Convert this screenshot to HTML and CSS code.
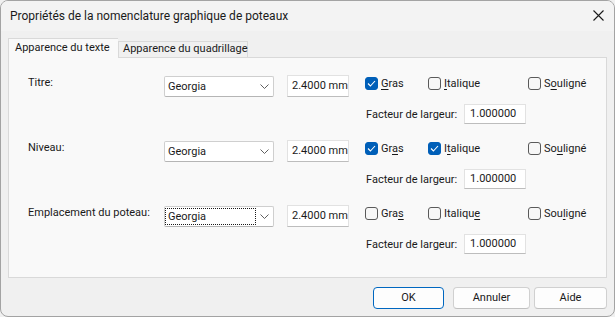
FILE: index.html
```html
<!DOCTYPE html>
<html lang="fr">
<head>
    <meta charset="UTF-8">
    <title>Propriétés de la nomenclature graphique de poteaux</title>
    <link rel="stylesheet" href="styles.css">
</head>
<body>
    <div class="window">
        <div class="titlebar">
            <span class="title">Propriétés de la nomenclature graphique de poteaux</span>
            <svg class="close" width="11" height="11" viewBox="0 0 11 11">
                <path d="M0.5 0.5 L10.5 10.5 M10.5 0.5 L0.5 10.5" stroke="#1a1a1a" stroke-width="1.1" fill="none"/>
            </svg>
        </div>

        <div class="content">
            <div class="tabs">
                <div class="tab active">Apparence du texte</div>
                <div class="tab">Apparence du quadrillage</div>
            </div>

            <div class="panel">
                <!-- Titre -->
                <div class="group">
                    <div class="line">
                        <span class="label">Titre:</span>
                        <div class="combo">
                            <span class="combo-text">Georgia</span>
                            <svg class="chevron" width="9" height="5" viewBox="0 0 9 5"><path d="M0.5 0.5 L4.5 4.5 L8.5 0.5" stroke="#5f5f5f" fill="none"/></svg>
                        </div>
                        <div class="field">2.4000 mm</div>
                        <div class="checks">
                            <div class="check gras"><span class="box checked"><svg width="9" height="7" viewBox="0 0 9 7"><path d="M1 3.5 L3.4 6 L8 1" stroke="#fff" stroke-width="1.1" fill="none"/></svg></span><span><u>G</u>ras</span></div>
                            <div class="check italique"><span class="box"></span><span><u>I</u>talique</span></div>
                            <div class="check"><span class="box"></span><span>S<u>o</u>uligné</span></div>
                        </div>
                    </div>
                    <div class="line sub">
                        <span class="factor-label">Facteur de largeur:</span>
                        <div class="field factor">1.000000</div>
                    </div>
                </div>

                <!-- Niveau -->
                <div class="group">
                    <div class="line">
                        <span class="label">Niveau:</span>
                        <div class="combo">
                            <span class="combo-text">Georgia</span>
                            <svg class="chevron" width="9" height="5" viewBox="0 0 9 5"><path d="M0.5 0.5 L4.5 4.5 L8.5 0.5" stroke="#5f5f5f" fill="none"/></svg>
                        </div>
                        <div class="field">2.4000 mm</div>
                        <div class="checks">
                            <div class="check gras"><span class="box checked"><svg width="9" height="7" viewBox="0 0 9 7"><path d="M1 3.5 L3.4 6 L8 1" stroke="#fff" stroke-width="1.1" fill="none"/></svg></span><span>Gr<u>a</u>s</span></div>
                            <div class="check italique"><span class="box checked"><svg width="9" height="7" viewBox="0 0 9 7"><path d="M1 3.5 L3.4 6 L8 1" stroke="#fff" stroke-width="1.1" fill="none"/></svg></span><span>I<u>t</u>alique</span></div>
                            <div class="check"><span class="box"></span><span>So<u>u</u>ligné</span></div>
                        </div>
                    </div>
                    <div class="line sub">
                        <span class="factor-label">Facteur de largeur:</span>
                        <div class="field factor">1.000000</div>
                    </div>
                </div>

                <!-- Emplacement du poteau -->
                <div class="group">
                    <div class="line">
                        <span class="label">Emplacement du poteau:</span>
                        <div class="combo">
                            <span class="combo-text focused">Georgia</span>
                            <svg class="chevron" width="9" height="5" viewBox="0 0 9 5"><path d="M0.5 0.5 L4.5 4.5 L8.5 0.5" stroke="#5f5f5f" fill="none"/></svg>
                        </div>
                        <div class="field">2.4000 mm</div>
                        <div class="checks">
                            <div class="check gras"><span class="box"></span><span>Gra<u>s</u></span></div>
                            <div class="check italique"><span class="box"></span><span>Italiqu<u>e</u></span></div>
                            <div class="check"><span class="box"></span><span>Sou<u>l</u>igné</span></div>
                        </div>
                    </div>
                    <div class="line sub">
                        <span class="factor-label">Facteur de largeur:</span>
                        <div class="field factor">1.000000</div>
                    </div>
                </div>
            </div>

            <div class="buttons">
                <div class="btn default">OK</div>
                <div class="btn cancel">Annuler</div>
                <div class="btn help">Aide</div>
            </div>
        </div>
    </div>
</body>
</html>
```

FILE: styles.css
```css
* {
    margin: 0;
    padding: 0;
    box-sizing: border-box;
}

body {
    font-family: Roboto, 'Liberation Sans', Arial, sans-serif;
    font-size: 11px;
    color: #1a1a1a;
    background-color: #f0f0f0;
}

.window {
    width: 615px;
    height: 317px;
    border: 1px solid #a3a3a3;
    border-radius: 8px;
    background-color: #f0f0f0;
    overflow: hidden;
}

.titlebar {
    height: 30px;
    display: flex;
    align-items: center;
    justify-content: space-between;
    padding: 0 10px 0 9px;
    background-color: #f3f3f3;
}

.title {
    font-size: 12px;
    margin-top: -1px;
}

.close {
    margin-top: -1px;
}

.content {
    padding: 0 7px;
}

/* onglets */
.tabs {
    display: flex;
    align-items: flex-end;
    margin-top: 7px;
    height: 19px;
    position: relative;
    z-index: 2;
    white-space: nowrap;
}

.tab {
    height: 16px;
    line-height: 14px;
    padding: 0 4px;
    width: 130px;
    border: 1px solid #d9d9d9;
    border-bottom: none;
    background-color: #f0f0f0;
}

.tab.active {
    height: 20px;
    line-height: 18px;
    margin-bottom: -1px;
    padding: 0 6px;
    width: 110px;
    background-color: #f9f9f9;
    border-right: none;
}

.panel {
    height: 221px;
    border: 1px solid #d9d9d9;
    background-color: #f9f9f9;
    padding: 17px 0 0 19px;
    position: relative;
    z-index: 1;
}

.group {
    margin-bottom: 16px;
}

.line {
    display: flex;
    align-items: flex-start;
    height: 22px;
}

.line.sub {
    margin-top: 7px;
    height: 20px;
    padding-left: 338px;
    align-items: center;
}

.label {
    width: 136px;
    line-height: 15px;
    white-space: nowrap;
}

.combo {
    width: 110px;
    height: 21px;
    margin-top: 1px;
    border: 1px solid #cfcfcf;
    border-bottom-color: #b5b5b5;
    border-radius: 2px;
    background-color: #ffffff;
    display: flex;
    align-items: center;
    justify-content: space-between;
    padding: 0 4px 0 0;
}

.combo-text {
    line-height: 15px;
    padding: 0 2px;
    border: 1px dotted transparent;
    width: 91px;
}

.combo-text.focused {
    border-color: #1a1a1a;
}

.field {
    width: 62px;
    height: 22px;
    margin-left: 13px;
    border: 1px solid #e2e2e2;
    border-bottom-color: #bdbdbd;
    background-color: #ffffff;
    line-height: 20px;
    padding-left: 4px;
    white-space: nowrap;
    overflow: hidden;
}

.field.factor {
    height: 20px;
    line-height: 18px;
    margin-left: 7px;
    padding-left: 5px;
}

.factor-label {
    white-space: nowrap;
}

.checks {
    display: flex;
    margin-left: 16px;
    margin-top: 2px;
}

.check {
    display: flex;
    align-items: center;
    gap: 3px;
    line-height: 13px;
}

.check.gras {
    width: 63px;
}

.check.italique {
    width: 100px;
}

.box {
    width: 13px;
    height: 13px;
    border: 1px solid #5a5a5a;
    border-radius: 3px;
    background-color: #f7f7f7;
    display: flex;
    align-items: center;
    justify-content: center;
}

.box.checked {
    background-color: #005fb8;
    border-color: #005fb8;
}

.check u {
    text-decoration-thickness: 1px;
    text-underline-offset: 2px;
}

/* boutons */
.buttons {
    display: flex;
    justify-content: flex-end;
    margin-top: 9px;
}

.btn {
    height: 22px;
    line-height: 20px;
    text-align: center;
    border: 1px solid #d0d0d0;
    border-bottom-color: #c0c0c0;
    border-radius: 4px;
    background-color: #fdfdfd;
}

.btn.default {
    width: 71px;
    border: 1px solid #0067c0;
}

.btn.cancel {
    width: 77px;
    margin-left: 9px;
}

.btn.help {
    width: 73px;
    margin-left: 4px;
}
```
